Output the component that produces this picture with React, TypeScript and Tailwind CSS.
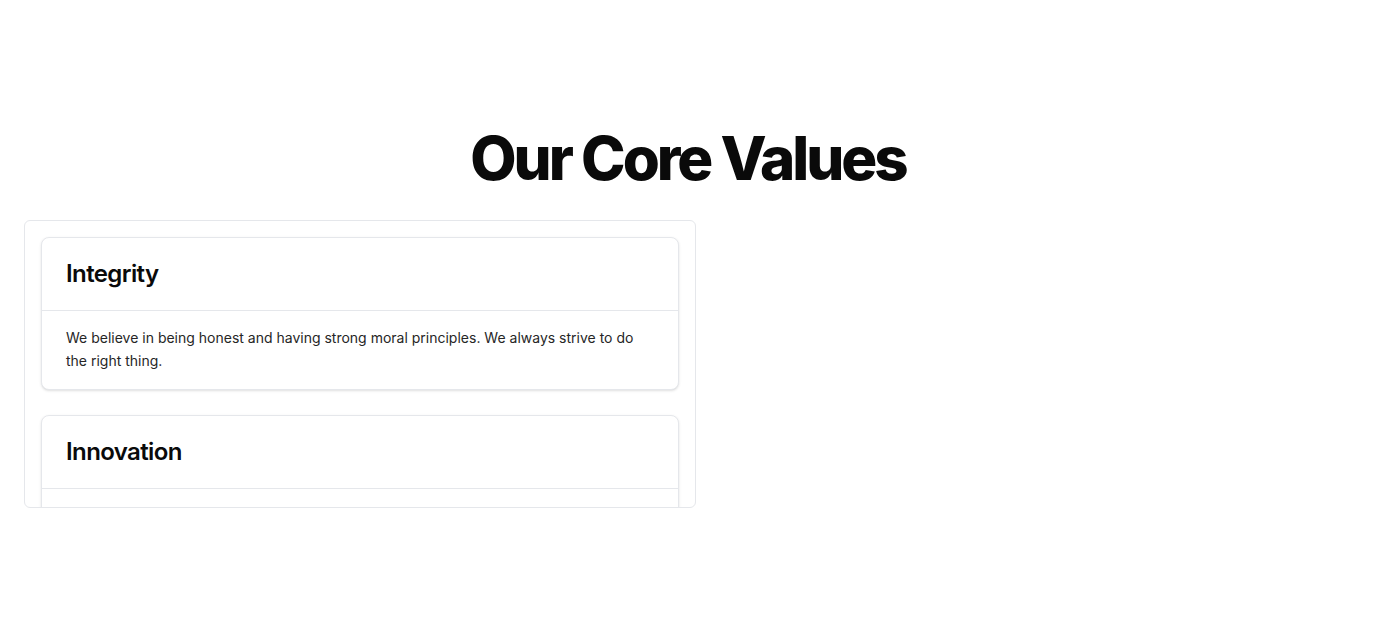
const values = [
  {
    title: "Integrity",
    text: "We believe in being honest and having strong moral principles. We always strive to do the right thing.",
  },
  {
    title: "Innovation",
    text: "We embrace new ideas and creative thinking. We are always looking for better ways to solve problems.",
  },
  {
    title: "Teamwork",
    text: "We work together to achieve common goals. We value every voice and support each other.",
  },
];

export default function App() {
  return (
    <div
      className="flex min-h-screen flex-col justify-center bg-white px-6 text-[#0a0a0a]"
      style={{ fontFamily: "Inter, 'Noto Sans', sans-serif" }}
    >
      <h1 className="mb-8 text-center text-6xl font-extrabold leading-[60px] tracking-tighter">
        Our Core Values
      </h1>
      <div className="h-72 w-full max-w-2xl overflow-hidden rounded-md border border-[#e5e7eb] p-4">
        <div className="flex flex-col gap-[25px]">
          {values.map((v) => (
            <div
              key={v.title}
              className="rounded-lg border border-[#e5e7eb] bg-white shadow-sm"
            >
              <div className="border-b border-[#e5e7eb] p-6">
                <h3 className="text-2xl font-semibold leading-none tracking-tight">
                  {v.title}
                </h3>
              </div>
              <div className="px-6 py-4">
                <p className="text-sm leading-relaxed text-[#262626]">{v.text}</p>
              </div>
            </div>
          ))}
        </div>
      </div>
    </div>
  );
}
